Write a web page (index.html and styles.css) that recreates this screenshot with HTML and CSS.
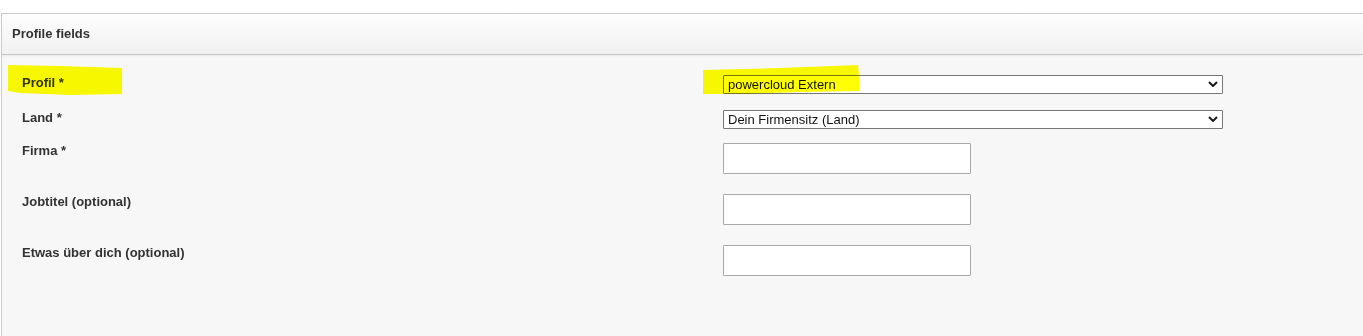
FILE: index.html
```html
<!DOCTYPE html>
<html lang="de">
<head>
<meta charset="utf-8">
<title>Profile fields</title>
<link rel="stylesheet" href="styles.css">
</head>
<body>
<div class="page">
  <section class="panel">
    <header class="panel-heading">Profile fields</header>
    <div class="panel-body">
      <div class="form-grid">
        <label class="field-label" for="profil">Profil *</label>
        <div class="field">
          <div class="select-wrap">
            <select id="profil" class="select">
              <option>powercloud Extern</option>
            </select>
            <svg class="chevron" width="10" height="6" viewBox="0 0 10 6"><path d="M1 1 L5 5 L9 1" fill="none" stroke="#1a1a1a" stroke-width="2"/></svg>
          </div>
        </div>

        <label class="field-label" for="land">Land *</label>
        <div class="field">
          <div class="select-wrap">
            <select id="land" class="select">
              <option>Dein Firmensitz (Land)</option>
            </select>
            <svg class="chevron" width="10" height="6" viewBox="0 0 10 6"><path d="M1 1 L5 5 L9 1" fill="none" stroke="#1a1a1a" stroke-width="2"/></svg>
          </div>
        </div>

        <label class="field-label" for="firma">Firma *</label>
        <div class="field"><input id="firma" class="input" type="text"></div>

        <label class="field-label" for="job">Jobtitel (optional)</label>
        <div class="field"><input id="job" class="input" type="text"></div>

        <label class="field-label" for="about">Etwas über dich (optional)</label>
        <div class="field"><input id="about" class="input" type="text"></div>
      </div>

      <svg class="highlights" width="1000" height="60" viewBox="0 0 1000 60">
        <polygon points="6,10 58,11 120,13 120,39 68,40 18,38 6,36" fill="#ffff00"/>
        <polygon points="701,15 778,13 856,10 858,36 798,37 738,39 701,39" fill="#ffff00"/>
      </svg>
    </div>
  </section>
</div>
</body>
</html>
```

FILE: styles.css
```css
html, body {
  margin: 0;
  padding: 0;
  background: #ffffff;
}

body {
  font-family: "Liberation Sans", Arial, sans-serif;
  font-size: 13px;
  color: #333333;
  overflow: hidden;
}

.page {
  padding: 13px 0 0 1px;
}

.panel {
  border: 1px solid #cccccc;
  border-right: none;
  border-bottom: none;
  background: #f7f7f7;
}

.panel-heading {
  height: 41px;
  box-sizing: border-box;
  padding: 12px 0 0 10px;
  font-weight: bold;
  font-size: 13px;
  line-height: 15px;
  color: #333333;
  background: linear-gradient(#fdfdfd, #f1f1f1);
  border-bottom: 1px solid #c8c8c8;
  box-shadow: 0 1px 2px rgba(0, 0, 0, 0.06);
  position: relative;
}

.panel-body {
  position: relative;
  min-height: 281px;
}

.form-grid {
  display: grid;
  grid-template-columns: 701px 1fr;
  grid-template-rows: 35px 33px 51px 51px 51px;
  padding: 20px 0 0 20px;
}

.field-label {
  font-weight: bold;
  font-size: 13px;
  color: #333333;
  line-height: normal;
}

.select-wrap {
  position: relative;
  width: 500px;
}

.select {
  appearance: none;
  -webkit-appearance: none;
  display: block;
  width: 500px;
  height: 19px;
  box-sizing: border-box;
  margin: 0;
  padding: 0 20px 0 4px;
  border: 1px solid #767676;
  border-radius: 1px;
  background: #ffffff;
  font-family: "Liberation Sans", Arial, sans-serif;
  font-size: 13px;
  line-height: 17px;
  color: #111111;
}

.chevron {
  position: absolute;
  right: 5px;
  top: 6px;
}

.input {
  display: block;
  width: 248px;
  height: 31px;
  box-sizing: border-box;
  margin: 0;
  padding: 0 4px;
  border: 1px solid #a9a9a9;
  border-radius: 1px;
  background: #ffffff;
  font-family: "Liberation Sans", Arial, sans-serif;
  font-size: 13px;
}

.highlights {
  position: absolute;
  left: 0;
  top: 0;
  mix-blend-mode: multiply;
  pointer-events: none;
}
```
